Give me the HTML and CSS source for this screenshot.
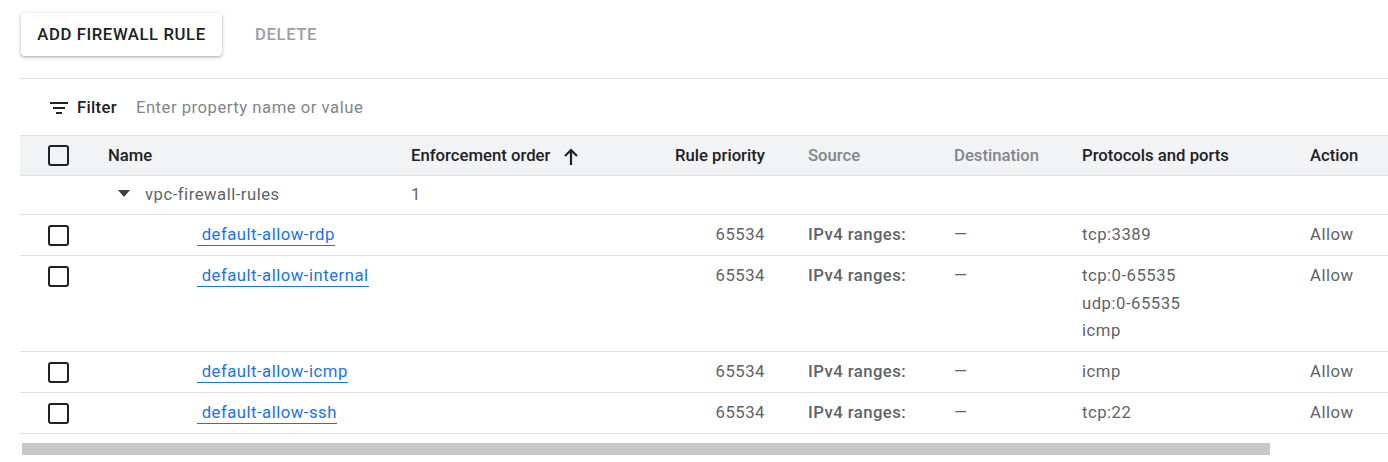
FILE: index.html
```html
<!DOCTYPE html>
<html>
<head>
<meta charset="utf-8">
<link rel="stylesheet" href="styles.css">
</head>
<body>
<div class="page">
  <div class="toolbar">
    <button class="btn btn-raised">ADD FIREWALL RULE</button>
    <button class="btn btn-flat">DELETE</button>
  </div>
  <div class="table-wrap">
    <div class="filter-bar">
      <svg class="filter-icon" width="18" height="12" viewBox="0 0 18 12"><rect x="0" y="0" width="18" height="2"/><rect x="3" y="5" width="12" height="2"/><rect x="6" y="10" width="6" height="2"/></svg>
      <span class="filter-label">Filter</span>
      <span class="filter-placeholder">Enter property name or value</span>
    </div>
    <div class="scroller">
      <table class="grid">
        <colgroup>
          <col class="c-check"><col class="c-name"><col class="c-order"><col class="c-prio"><col class="c-src"><col class="c-dst"><col class="c-proto"><col class="c-action">
        </colgroup>
        <thead>
          <tr>
            <th class="td-check"><span class="checkbox"></span></th>
            <th>Name</th>
            <th><span class="sort">Enforcement order <svg class="arrow" width="14" height="17" viewBox="0 0 14 17"><path d="M7 2 L7 17 M1 8 L7 2 L13 8" fill="none" stroke="#202124" stroke-width="2.2"/></svg></span></th>
            <th class="right">Rule priority</th>
            <th class="muted">Source</th>
            <th class="muted">Destination</th>
            <th>Protocols and ports</th>
            <th>Action</th>
          </tr>
        </thead>
        <tbody>
          <tr class="group">
            <td></td>
            <td><span class="caret"></span><span class="group-name">vpc-firewall-rules</span></td>
            <td>1</td>
            <td></td><td></td><td></td><td></td><td></td>
          </tr>
          <tr>
            <td class="td-check"><span class="checkbox"></span></td>
            <td class="name"><a href="#">&nbsp;default-allow-rdp</a></td>
            <td></td>
            <td class="right">65534</td>
            <td class="src">IPv4 ranges:</td>
            <td>—</td>
            <td>tcp:3389</td>
            <td>Allow</td>
          </tr>
          <tr>
            <td class="td-check"><span class="checkbox"></span></td>
            <td class="name"><a href="#">&nbsp;default-allow-internal</a></td>
            <td></td>
            <td class="right">65534</td>
            <td class="src">IPv4 ranges:</td>
            <td>—</td>
            <td class="proto">tcp:0-65535<br>udp:0-65535<br>icmp</td>
            <td>Allow</td>
          </tr>
          <tr>
            <td class="td-check"><span class="checkbox"></span></td>
            <td class="name"><a href="#">&nbsp;default-allow-icmp</a></td>
            <td></td>
            <td class="right">65534</td>
            <td class="src">IPv4 ranges:</td>
            <td>—</td>
            <td>icmp</td>
            <td>Allow</td>
          </tr>
          <tr>
            <td class="td-check"><span class="checkbox"></span></td>
            <td class="name"><a href="#">&nbsp;default-allow-ssh</a></td>
            <td></td>
            <td class="right">65534</td>
            <td class="src">IPv4 ranges:</td>
            <td>—</td>
            <td>tcp:22</td>
            <td>Allow</td>
          </tr>
        </tbody>
      </table>
    </div>
    <div class="hscroll"><div class="thumb"></div></div>
  </div>
</div>
</body>
</html>
```
FILE: styles.css
```css
* { box-sizing: border-box; }
html, body { margin: 0; padding: 0; background: #fff; }
body {
  font-family: Roboto, "Liberation Sans", Arial, sans-serif;
  font-size: 16.7px;
  color: #5f6368;
  overflow: hidden;
  width: 1388px;
  height: 462px;
}
.page { padding: 13px 0 0 20px; }
.toolbar { display: flex; align-items: center; gap: 12px; height: 43px; }
.btn {
  font-family: inherit;
  font-size: 16.7px;
  font-weight: 500;
  letter-spacing: 0.6px;
  border: none;
  background: #fff;
  height: 43px;
  border-radius: 4px;
  cursor: pointer;
  padding: 0;
}
.btn-raised {
  margin-left: 1px;
  width: 201px;
  color: #202124;
  box-shadow: 0 1px 2px rgba(60,64,67,0.3), 0 1px 4px 1px rgba(60,64,67,0.15);
}
.btn-flat { color: #9aa0a6; padding: 0 21px; }

.table-wrap { margin-top: 22px; border-top: 1px solid #e0e0e0; }
.filter-bar {
  height: 56px;
  display: flex;
  align-items: center;
  padding-left: 30px;
}
.filter-icon { fill: #202124; margin-right: 9px; margin-top: 1px; }
.filter-label { font-weight: 500; color: #202124; margin-right: 19px; letter-spacing: 0.3px; }
.filter-placeholder { color: #80868b; letter-spacing: 0.5px; }

.scroller { overflow: hidden; width: 1368px; }
.grid { border-collapse: collapse; table-layout: fixed; width: 1500px; }
.c-check { width: 72px; }
.c-name { width: 303px; }
.c-order { width: 210px; }
.c-prio { width: 187px; }
.c-src { width: 146px; }
.c-dst { width: 128px; }
.c-proto { width: 228px; }
.c-action { width: 226px; }

.grid th, .grid td {
  text-align: left;
  vertical-align: top;
  padding: 10px 16px 10px 16px;
  line-height: 20px;
  border-bottom: 1px solid #e0e0e0;
  white-space: nowrap;
}
.grid td { letter-spacing: 0.5px; }
.grid thead tr { background: #f2f3f4; }
.grid th {
  font-weight: 500;
  color: #202124;
  border-top: 1px solid #e0e0e0;
  padding-top: 10px;
  padding-bottom: 9px;
}
.grid th.muted { color: #80868b; }
.grid .right { text-align: right; padding-right: 27px; }
.grid .td-check { padding: 10px 0 0 28px; }
.checkbox {
  display: block;
  width: 21px;
  height: 21px;
  border: 2.5px solid #202124;
  border-radius: 3px;
}
.grid thead .td-check { padding-top: 9px; }
.sort { display: inline-flex; align-items: center; gap: 14px; }
.arrow { margin-top: 0; }

.grid tr.group td { padding-top: 9px; padding-bottom: 9px; }
.caret {
  display: inline-block;
  width: 0; height: 0;
  border-left: 6.5px solid transparent;
  border-right: 6.5px solid transparent;
  border-top: 7px solid #3c4043;
  margin: 0 15px 0 10px;
  vertical-align: 3px;
}
.group-name { color: #5f6368; }

.name a {
  color: #1a73e8;
  text-decoration: none;
  border-bottom: 1px solid #1a73e8;
  margin-left: 89px;
  padding-bottom: 1px;
}
.grid td.src { font-weight: 500; letter-spacing: 0.45px; }
.grid td.proto { line-height: 27.5px; padding-top: 6px; padding-bottom: 6px; }

.hscroll { margin-top: 9px; height: 12px; width: 1368px; }
.thumb { height: 12px; width: 1248px; margin-left: 2px; background: #c8c8c8; }
```
